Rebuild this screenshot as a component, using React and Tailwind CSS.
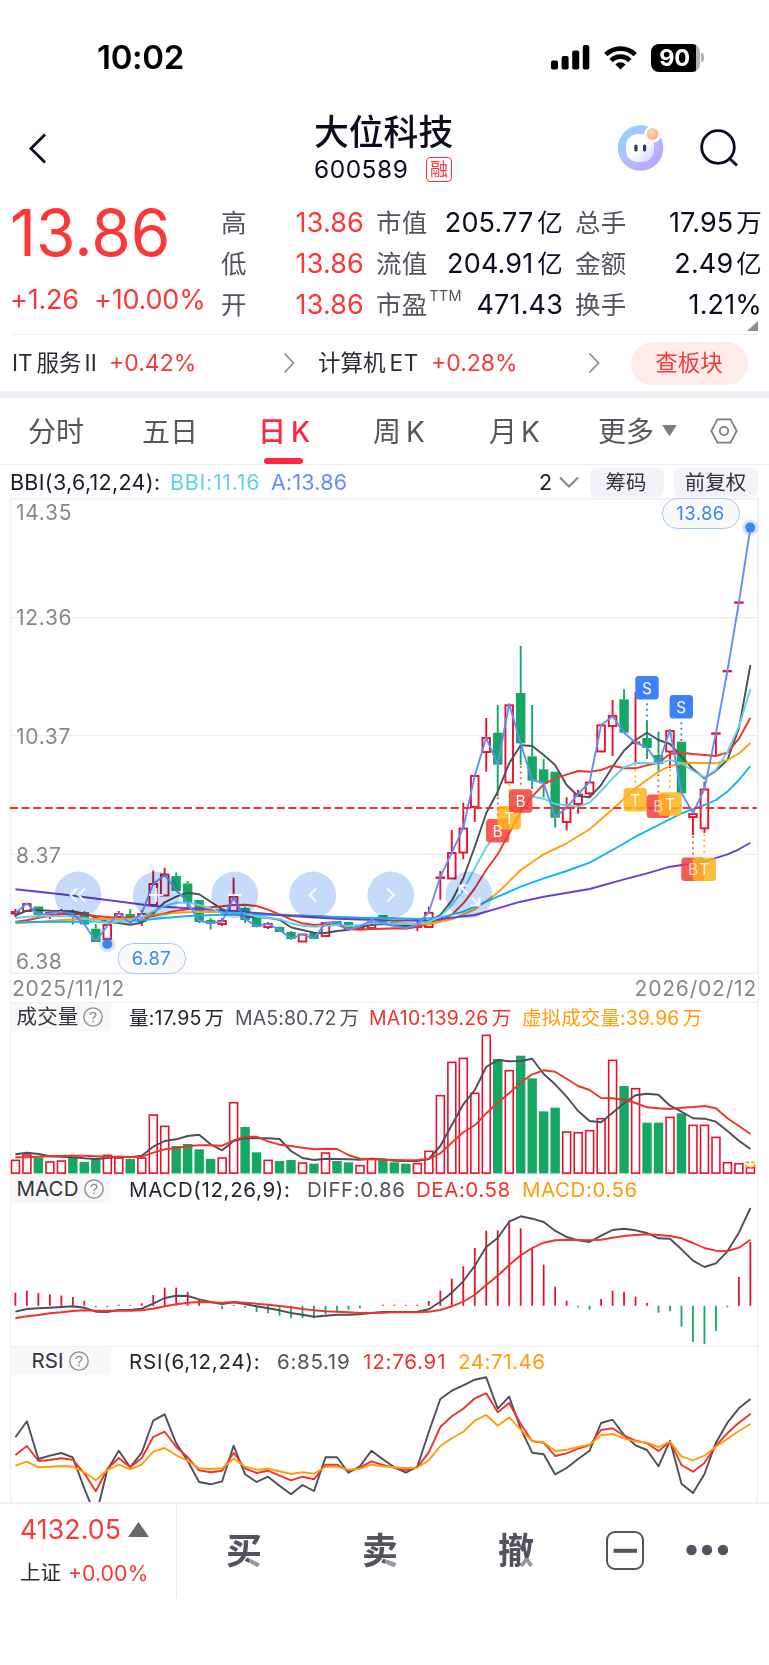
const X0 = 15.4;
const STEP = 11.484;
const cx = (i) => X0 + i * STEP;

// [direction, high, bodyTop, bodyBottom, low]
const CANDLES = [
  ['r', 909, 912, 913.5, 917], ['r', 903, 904, 911, 911], ['g', 906.5, 906.5, 915, 915], ['r', 912, 913, 914, 919],
  ['r', 909, 912, 914, 914], ['g', 909.5, 911.5, 914.5, 924.5], ['g', 911, 912, 924.5, 924.5], ['g', 924, 928.7, 942, 942],
  ['r', 924, 925, 939, 944], ['r', 911, 914, 917, 918], ['g', 909, 914, 919, 922], ['r', 910, 914, 921, 926],
  ['r', 870.5, 884, 905, 907], ['r', 867.7, 874.5, 895.5, 896], ['g', 872.5, 876, 891, 891], ['g', 881, 883.5, 903, 909],
  ['g', 900, 900, 922, 923], ['g', 918, 920, 924, 929.5], ['r', 918, 921, 924, 926], ['r', 877.7, 897, 911, 911],
  ['g', 906.7, 908, 920, 923], ['g', 916, 917, 927, 927], ['r', 922, 924, 927, 929], ['g', 926.5, 927, 932, 932],
  ['g', 931, 932, 939, 940], ['r', 934, 934.5, 941.5, 942], ['g', 932, 932.7, 939, 939], ['r', 922, 923, 936, 936],
  ['g', 921, 921, 924, 925], ['g', 921.7, 922, 929.5, 931], ['r', 925, 926, 928, 928], ['r', 920, 923, 928, 928],
  ['g', 915, 915, 924, 924], ['g', 921, 922, 926, 926], ['g', 925, 926, 929, 929], ['r', 921, 924, 927, 931],
  ['r', 906.7, 912.8, 927, 927], ['r', 871, 877.5, 878, 899.7], ['r', 830, 853, 878.5, 878.5], ['r', 802.7, 828.5, 852.5, 859],
  ['r', 775.5, 776, 807, 822], ['r', 718, 738, 752, 771.7], ['g', 705, 732.7, 764.7, 796], ['r', 704, 705.3, 782.5, 783],
  ['g', 646, 693, 743.3, 765], ['g', 705, 756.3, 780.7, 789], ['g', 759, 769.3, 783.3, 797.3], ['g', 771.7, 771.7, 817.7, 827.5],
  ['r', 797.3, 808, 822, 830.3], ['r', 790, 794.5, 804, 813.7], ['r', 782, 782.5, 793.3, 798], ['r', 724.5, 725.3, 751.5, 752],
  ['r', 700, 716, 726, 756], ['g', 689.3, 699.3, 732.7, 732.7], ['r', 692, 742.5, 743, 763], ['g', 722, 738, 748, 759],
  ['g', 731.5, 755, 764, 773], ['r', 729, 731, 751.5, 768], ['g', 741.7, 741.7, 793.3, 793.3], ['r', 813, 814, 817, 835],
  ['r', 781.7, 789.5, 828.3, 833], ['r', 733.3, 733.3, 733.8, 757], ['r', 671, 671, 671.4, 671.4], ['r', 602.4, 602.4, 602.8, 602.8],
];

const CLOSE = [
  913.3, 903.3, 914.7, 913.5, 911.7, 914, 924, 941.3, 925.7, 913.3, 923.3, 913.5, 884, 875, 890, 902.7, 921, 923, 921.5,
  897.3, 919, 926.7, 923.7, 930, 938.5, 934.3, 938.5, 922.7, 922, 929.7, 926.7, 920, 923.5, 926, 928, 925, 912, 877, 852.7,
  828, 775.5, 737.7, 764.7, 704, 743.5, 780, 783, 817, 807.7, 794, 782, 725, 716.3, 732.7, 742.7, 747.5, 764, 730, 793,
  813, 789, 733.3, 671, 602.5, 527.7,
];
const MA5 = [
  915.7, 910.7, 910, 910.7, 911, 911.3, 913.7, 917.7, 921.7, 923, 924.7, 922.7, 913.3, 902.3, 896.7, 892.7, 894.3, 901.7,
  909.3, 913.3, 916.7, 917.3, 917.7, 919.7, 927.3, 930, 932.7, 933, 931, 929.7, 927, 925, 924, 925, 926, 925, 921, 915,
  900.7, 878.3, 846.7, 813.3, 791.7, 763.3, 745.3, 746, 755, 765, 785, 796, 797.3, 785, 766.7, 750.5, 740, 732.7, 740,
  744, 756.7, 769, 778.3, 770.7, 760, 728.3, 665,
];
const BBI = [
  918, 916.7, 916.3, 916.3, 916.3, 916, 918, 921.7, 922.7, 921.7, 920, 917, 911.7, 906, 902.7, 902.7, 905, 908.3, 912.7,
  912.7, 913.3, 916.7, 918, 919, 923.3, 925.7, 926.7, 926, 925, 926, 925, 923.3, 923.3, 923.7, 924, 924, 921.7, 916.7,
  905, 890, 868.3, 847.3, 831.7, 815, 801, 796.7, 798.7, 804, 805.3, 806.7, 802.7, 791, 778.3, 767.3, 763, 763, 763.3,
  760, 763.3, 770.7, 777.3, 770, 752, 726.7, 688.7,
];
const MA10 = [
  921.7, 920.3, 917.7, 916, 914.3, 913.7, 914.3, 916, 917, 917.7, 917.3, 917.7, 916, 913.3, 910.7, 909.3, 908, 907.3,
  906.3, 905, 904.7, 906, 909.7, 914.3, 919.3, 923.3, 925, 924.3, 924.7, 929, 929.7, 929, 928.7, 928.3, 928.7, 926.7,
  924, 920.7, 914.7, 903.3, 888.3, 870, 854.3, 833.3, 811.7, 796.7, 784.3, 778.3, 774.7, 771, 771.7, 770, 765.7, 768.3,
  768.3, 765.3, 762.7, 754, 752.7, 754, 755, 756, 752.7, 738.7, 717.7,
];
// sparse averages: [index, y]
const MA20 = [
  [0, 923.3], [2, 922], [4, 920], [6, 919], [8, 919], [10, 919], [12, 915], [14, 912.7], [16, 911.7], [18, 912], [20, 912.7],
  [22, 914], [24, 915], [26, 916], [28, 917], [30, 918], [32, 919.5], [34, 923], [36, 924], [38, 919.3], [40, 909.3],
  [42, 892.7], [44, 870], [46, 854.3], [48, 843.3], [50, 829.3], [52, 809.3], [54, 788.3], [56, 771.7], [57, 766],
  [58, 763.3], [59, 762.7], [61, 763.3], [62, 760], [63, 753.5], [64, 743],
];
const MA30 = [
  [0, 922], [5, 921.7], [10, 921.3], [13, 918], [15, 916], [18, 914.7], [22, 914.7], [26, 916.3], [30, 917.7], [33, 918.3],
  [35, 919], [37, 917.7], [39, 911.7], [42, 896.7], [44, 886.7], [46, 878.3], [48, 871], [50, 862.7], [52, 850],
  [54, 836.7], [56, 825], [58, 813.3], [60, 805], [61, 800], [62, 791.7], [63, 780], [64, 766],
];
const MA60 = [
  [0, 889.3], [4, 894.3], [8, 900], [12, 906], [16, 909], [20, 912], [24, 916], [28, 918.7], [32, 920.3], [36, 920.7],
  [38, 917.7], [40, 915], [42, 908.3], [44, 901.7], [46, 896.7], [50, 889], [53, 879.3], [55, 873.3], [57, 866.7],
  [60, 861.7], [62, 854.3], [63, 849.3], [64, 842.7],
];

// offsets below y=990 in thirds of a pixel
const VOL = [
  509, 493, 503, 514, 511, 502, 516, 507, 494, 502, 507, 502, 373, 407, 468, 462, 478, 507, 502, 336, 411, 487, 509, 513,
  510, 517, 521, 487, 513, 517, 525, 506, 511, 517, 521, 519, 482, 315, 215, 203, 308, 134, 207, 240, 197, 265, 364, 353,
  424, 426, 420, 384, 209, 288, 294, 398, 398, 380, 370, 404, 404, 440, 516, 519, 531,
];
const VOL_MA5 = [
  493, 488, 492, 499, 500, 502, 505, 507, 504, 500, 502, 497, 470, 453, 448, 438, 434, 463, 481, 453, 444, 445, 445, 447,
  483, 504, 510, 506, 507, 508, 509, 506, 508, 512, 513, 513, 507, 468, 405, 343, 300, 231, 210, 214, 213, 206, 252, 283,
  320, 363, 393, 397, 368, 340, 316, 311, 314, 347, 365, 385, 386, 395, 423, 452, 477,
];
const VOL_MA10 = [
  502, 502, 500, 499, 498, 497, 497, 499, 500, 500, 501, 500, 488, 478, 474, 469, 466, 466, 467, 451, 440, 440, 454, 464,
  468, 473, 478, 476, 477, 495, 506, 508, 509, 510, 511, 510, 507, 490, 458, 427, 406, 370, 338, 310, 278, 253, 241, 245,
  266, 288, 300, 324, 325, 329, 339, 352, 355, 357, 353, 351, 348, 355, 385, 408, 432,
];

// offsets below y=1170 in thirds of a pixel
const MACD = [
  368, 362, 369, 373, 377, 381, 392, 412, 412, 404, 405, 400, 375, 353, 353, 366, 388, 408, 417, 405, 413, 426, 430, 437,
  445, 444, 445, 433, 423, 419, 415, 408, 404, 404, 405, 404, 393, 362, 326, 289, 234, 182, 181, 152, 175, 233, 284, 350,
  392, 412, 419, 387, 362, 365, 380, 399, 428, 424, 470, 515, 522, 483, 412, 321, 216,
];
const DIFF = [
  425, 417, 415, 413, 411, 409, 413, 425, 426, 420, 420, 416, 401, 384, 377, 378, 388, 396, 402, 397, 402, 409, 415, 421,
  429, 434, 440, 437, 434, 434, 433, 429, 426, 426, 426, 425, 418, 395, 368, 334, 287, 231, 204, 155, 139, 146, 156, 182,
  201, 211, 216, 197, 180, 176, 181, 189, 205, 206, 238, 272, 291, 280, 244, 188, 114,
];
const DEA = [
  445, 439, 435, 430, 427, 423, 421, 422, 422, 422, 422, 421, 416, 409, 403, 398, 396, 397, 398, 396, 398, 401, 404, 408,
  412, 417, 421, 424, 425, 427, 429, 429, 428, 427, 427, 427, 425, 420, 409, 395, 374, 345, 317, 285, 256, 234, 218, 211,
  209, 210, 211, 209, 203, 198, 195, 193, 195, 198, 205, 219, 234, 242, 243, 233, 209,
];
const RSI6 = [
  802, 754, 867, 857, 849, 862, 955, 1040, 900, 842, 892, 848, 752, 733, 820, 873, 936, 943, 934, 827, 913, 936, 920, 947,
  973, 945, 963, 862, 862, 908, 889, 842, 868, 892, 908, 890, 786, 687, 662, 646, 629, 622, 716, 680, 776, 848, 853, 913,
  894, 867, 842, 759, 749, 795, 826, 840, 889, 812, 941, 969, 913, 818, 758, 715, 687,
];
const RSI12 = [
  855, 828, 873, 870, 865, 869, 910, 964, 897, 864, 892, 865, 801, 785, 831, 862, 901, 907, 902, 849, 895, 909, 902, 917,
  931, 920, 928, 884, 884, 903, 893, 874, 885, 893, 900, 892, 847, 771, 739, 716, 685, 670, 727, 699, 762, 814, 818, 858,
  850, 836, 826, 780, 775, 797, 812, 820, 843, 815, 885, 905, 879, 827, 790, 758, 732,
];
const RSI24 = [
  887, 875, 892, 890, 888, 890, 907, 931, 900, 884, 898, 884, 845, 834, 856, 872, 895, 897, 895, 866, 890, 899, 896, 904,
  912, 907, 911, 890, 890, 899, 896, 884, 889, 892, 895, 893, 871, 828, 805, 785, 752, 735, 767, 742, 779, 813, 817, 843,
  839, 831, 824, 796, 792, 805, 814, 818, 831, 815, 859, 871, 857, 830, 806, 783, 762,
];

const line = (ys) => ys.map((y, i) => `${cx(i).toFixed(1)},${y}`).join(' ');
const sparse = (pts) => pts.map(([i, y]) => `${cx(i).toFixed(1)},${y}`).join(' ');
const thirds = (ys, base) => line(ys.map((y) => (base + y / 3).toFixed(1)));

const RED = '#e8112d';
const GREEN = '#15a862';

function Line({ points, color, width = 1.9 }) {
  return <polyline points={points} fill="none" stroke={color} strokeWidth={width} strokeLinejoin="round" />;
}

function StatusBar() {
  return (
    <div className="flex h-[90px] items-center pt-[25px] text-black">
      <span className="ml-[97px] w-[454px] text-[33px] leading-none font-semibold tracking-[-0.3px]">10:02</span>
      <svg className="h-[25px] w-[39px]" viewBox="0 0 39 25">
        <rect x="0" y="15.5" width="7" height="9" rx="2" />
        <rect x="10.6" y="11" width="7" height="13.5" rx="2" />
        <rect x="21.2" y="5.5" width="7" height="19" rx="2" />
        <rect x="31.8" y="0" width="6.5" height="24.5" rx="2" />
      </svg>
      <svg className="ml-[14px] h-[24px] w-[33px]" viewBox="0 0 33 24">
        <g fill="none" stroke="#000" strokeWidth="4.8">
          <path d="M1.8 8.6 A21 21 0 0 1 31.2 8.6" />
          <path d="M7.1 14.5 A13.3 13.3 0 0 1 25.9 14.5" />
        </g>
        <path d="M11.4 18.4 A7 7 0 0 1 21.6 18.4 L16.5 23.6 Z" />
      </svg>
      <div className="ml-[14px] flex h-[28px] w-[49px] items-center justify-center overflow-hidden rounded-[8px] bg-[linear-gradient(90deg,#000_91%,#b3b3b3_91%)]">
        <span className="mr-[2px] text-[23.5px] leading-none font-bold tracking-[-0.3px] text-white">90</span>
      </div>
      <div className="ml-[1px] h-[9px] w-[3px] rounded-r-full bg-[#b3b3b3]" />
    </div>
  );
}

function TitleBar() {
  return (
    <div className="flex h-[108px] items-start text-[#0d0c1f]">
      <svg className="mt-[43px] ml-[28px] h-[31px] w-[20px]" viewBox="0 0 20 31" fill="none" stroke="#0d0c1f" strokeWidth="2.8">
        <path d="M17 1.5 L3 15.5 L17 29.5" />
      </svg>
      <div className="ml-[266px] w-[300px] pt-[25px]">
        <div className="text-[34.8px] leading-[34px] font-medium">大位科技</div>
        <div className="mt-[7px] flex items-center">
          <span className="w-[112px] text-[24.5px] leading-[24px] tracking-[0.5px]">600589</span>
          <span className="mt-[1px] flex h-[25px] w-[26px] items-center justify-center rounded-[4px] border-[1.5px] border-[#fb3b3b] text-[18px] leading-none text-[#fb3b3b]">
            融
          </span>
        </div>
      </div>
      <svg className="mt-[33px] ml-[2px] h-[50px] w-[50px]" viewBox="0 0 50 50">
        <defs>
          <linearGradient id="ring" x1="0" y1="0" x2="0.9" y2="1">
            <stop offset="0" stopColor="#8fd0ff" />
            <stop offset="0.45" stopColor="#a9c4ff" />
            <stop offset="1" stopColor="#c09bff" />
          </linearGradient>
          <linearGradient id="face" x1="0" y1="0" x2="1" y2="1">
            <stop offset="0.5" stopColor="#fff" />
            <stop offset="1" stopColor="#cfc8ff" />
          </linearGradient>
          <radialGradient id="ball" cx="0.4" cy="0.35" r="0.7">
            <stop offset="0" stopColor="#ffdcb8" />
            <stop offset="1" stopColor="#ffac6e" />
          </radialGradient>
        </defs>
        <circle cx="24.5" cy="25" r="22.8" fill="url(#ring)" />
        <rect x="10" y="11" width="28" height="28" rx="12" fill="url(#face)" />
        <circle cx="36.5" cy="11.5" r="8.5" fill="#fff" />
        <circle cx="36.5" cy="11" r="5.9" fill="url(#ball)" />
        <rect x="18.3" y="21.5" width="3.2" height="7" rx="1.6" fill="#2d3a64" />
        <rect x="27" y="21.5" width="3.2" height="7" rx="1.6" fill="#2d3a64" />
      </svg>
      <svg className="mt-[38px] ml-[33px] h-[42px] w-[42px]" viewBox="0 0 42 42" fill="none" stroke="#0d0c1f" strokeWidth="2.8">
        <circle cx="19" cy="19" r="16.3" />
        <path d="M30 30 L38 37.5" />
      </svg>
    </div>
  );
}

const STATS = [
  ['高', '13.86', '市值', '205.77', '亿', '总手', '17.95', '万'],
  ['低', '13.86', '流值', '204.91', '亿', '金额', '2.49', '亿'],
  ['开', '13.86', '市盈', '471.43', '', '换手', '1.21%', ''],
];

function Quote() {
  return (
    <div className="relative flex h-[136px] items-start text-[#fb3838]">
      <div className="w-[221px] pl-[10px]">
        <div className="mt-[3px] text-[64px] leading-[64px]">13.86</div>
        <div className="mt-[21px] flex text-[27px] leading-[27px]">
          <span className="w-[84px] tracking-[-0.2px]">+1.26</span>
          <span className="tracking-[-0.2px]">+10.00%</span>
        </div>
      </div>
      <div className="mt-[4px] flex flex-col">
        {STATS.map(([a, av, b, bv, bu, c, cv, cu]) => (
          <div key={a} className="flex h-[41px] items-center text-[27px] leading-none tracking-[0.15px] text-[#0d0c1f]">
            <span className="w-[50px] text-[25.5px] text-[#54535e]">{a}</span>
            <span className="w-[93px] text-right text-[#fb3838]">{av}</span>
            <span className="ml-[12px] flex w-[60px] items-start text-[25.5px] whitespace-nowrap text-[#54535e]">
              {b}
              {b === '市盈' && <sup className="top-0 -mt-[3px] ml-[2px] text-[14.5px] leading-none tracking-[0.2px]">TTM</sup>}
            </span>
            <span className="flex w-[127px] items-center justify-end">
              {bv}
              {bu && <span className="ml-[4px] text-[25.5px]">{bu}</span>}
            </span>
            <span className="ml-[12px] w-[52px] text-[25.5px] text-[#54535e]">{c}</span>
            <span className="flex w-[135px] items-center justify-end">
              {cv}
              {cu && <span className="ml-[3px] text-[25.5px]">{cu}</span>}
            </span>
          </div>
        ))}
      </div>
      <svg className="absolute right-[11px] bottom-[3px] h-[10px] w-[11px]" viewBox="0 0 11 10">
        <path d="M11 0 V10 H0 Z" fill="#8b8b93" />
      </svg>
    </div>
  );
}

function Arrow() {
  return (
    <svg className="h-[22px] w-[12px]" viewBox="0 0 12 22" fill="none" stroke="#909098" strokeWidth="1.8">
      <path d="M1.5 1.5 L10.5 11 L1.5 20.5" />
    </svg>
  );
}

function Sectors() {
  return (
    <div className="mx-3 flex h-[57px] items-center border-t border-[#eeeeee] text-[22.5px] leading-none text-[#2c2c34]">
      <span className="w-[97px] whitespace-nowrap">IT<span className="ml-[4px]">服务</span><span className="ml-[3px]">II</span></span>
      <span className="w-[174px] text-[23px] text-[#fb3838]">+0.42%</span>
      <Arrow />
      <span className="ml-[23px] w-[113px] whitespace-nowrap">计算机<span className="ml-[4px] tracking-[0.6px]">ET</span></span>
      <span className="w-[157px] text-[23px] text-[#fb3838]">+0.28%</span>
      <Arrow />
      <span className="ml-[31px] flex h-[43px] w-[117px] items-center justify-center rounded-full bg-[#feeceb] pr-[1px] text-[22.5px] text-[#fb3838]">
        查板块
      </span>
    </div>
  );
}

function Tabs() {
  return (
    <div className="relative flex h-[67px] items-center border-b border-[#ededf0] pt-[2px] text-[28px] leading-none text-[#55555c]">
      <span className="ml-[28px] w-[114px]">分时</span>
      <span className="w-[116px]">五日</span>
      <span className="w-[115px] font-medium text-[#ff2642]">日<span className="ml-[5px]">K</span></span>
      <span className="w-[116px]">周<span className="ml-[5px]">K</span></span>
      <span className="w-[109px]">月<span className="ml-[4px]">K</span></span>
      <span className="w-[64px]">更多</span>
      <svg className="-mt-[4px] h-[11px] w-[15px]" viewBox="0 0 15 11"><path d="M1 0.5 H14 L7.5 10.5 Z" fill="#7d7c86" stroke="#7d7c86" /></svg>
      <svg className="-mt-[2px] ml-[33px] h-[26px] w-[28px]" viewBox="0 0 28 26" fill="none" stroke="#7d7c86" strokeWidth="1.8">
        <path d="M7.5 1.3 H20.5 L26.7 13 L20.5 24.7 H7.5 L1.3 13 Z" />
        <circle cx="14" cy="13" r="4.2" />
      </svg>
      <div className="absolute top-[60px] left-[264px] h-[6px] w-[39px] rounded-full bg-[#ff2642]" />
    </div>
  );
}

function IndicatorBar() {
  return (
    <div className="flex h-[33px] items-center pt-[2px] pl-[10px] text-[21.5px] leading-none text-[#1b1a2b]">
      <span className="w-[160px] tracking-[0.3px]">BBI(3,6,12,24):</span>
      <span className="w-[101px] tracking-[0.7px] text-[#62d2e8]">BBI:11.16</span>
      <span className="w-[268px] tracking-[0.2px] text-[#638cff]">A:13.86</span>
      <span className="w-[20px]">2</span>
      <svg className="-mt-[2px] h-[12px] w-[20px]" viewBox="0 0 20 12" fill="none" stroke="#85858d" strokeWidth="2"><path d="M1 1.5 L10 10.5 L19 1.5" /></svg>
      <span className="-mt-[1px] ml-[11px] flex h-[29px] w-[74px] items-center justify-center rounded-[6px] bg-[#f2f3f7] pt-[2px] pr-[2px] text-[20.5px] text-[#33333b]">筹码</span>
      <span className="-mt-[1px] ml-[10px] flex h-[29px] w-[84px] items-center justify-center rounded-[6px] bg-[#f2f3f7] pt-[2px] pr-[1px] text-[20.5px] text-[#33333b]">前复权</span>
    </div>
  );
}

const MARKS = [
  ['B', 497.7, 830.7, 797], ['T', 509.2, 817.7, 784], ['B', 520.7, 801, 766], ['T', 635.3, 799.7, 764],
  ['B', 658.3, 806.3, 774], ['T', 670, 804, 769], ['B', 693, 869.3, 836], ['T', 704.3, 869.3, 834],
];
const SELLS = [[647, 687.7, 722], [681.3, 706.7, 741]];

const BUTTONS = [
  [78, 'M-1 -6.5 L-7.5 0 L-1 6.5 M7 -6.5 L0.5 0 L7 6.5'],
  [156.3, 'M-7 0 H7 M0 -7 V7'],
  [234.7, 'M-7 0 H7'],
  [312.7, 'M3.5 -6.5 L-3 0 L3.5 6.5'],
  [390.8, 'M-3.5 -6.5 L3 0 L-3.5 6.5'],
  [469, 'M-1 -1 L-9 -9 M-9.5 -1 V-9.5 H-1 M3 3 L10 10 M10.5 2 V10.5 H2'],
];

function PriceChart() {
  return (
    <svg className="block h-[478px] w-[769px] bg-white" viewBox="0 498 769 478">
      <g stroke="#eeeef0" strokeWidth="1.2" fill="none">
        <rect x="10.6" y="498.6" width="747.4" height="474.8" strokeWidth="1.6" />
        <path d="M10 617.6 H758 M10 735.6 H758 M10 854.4 H758" />
      </g>
      <g fill="#87878a" fontSize="21" letterSpacing="0.7">
        <text x="16" y="519.5">14.35</text>
        <text x="16" y="625">12.36</text>
        <text x="16" y="743.7">10.37</text>
        <text x="16" y="862.5">8.37</text>
        <text x="16" y="969">6.38</text>
      </g>
      {CANDLES.map(([dir, high, top, bottom, low], i) => {
        const color = dir === 'r' ? RED : GREEN;
        return (
          <g key={i} stroke={color} strokeWidth="1.9">
            {high < top && <path d={`M${cx(i)} ${high} V${top}`} />}
            {low > bottom && <path d={`M${cx(i)} ${bottom} V${low}`} />}
            {dir === 'r' ? (
              <rect x={cx(i) - 3.8} y={top} width="7.6" height={bottom - top} fill="none" />
            ) : (
              <rect x={cx(i) - 4.7} y={top} width="9.4" height={bottom - top} fill={GREEN} stroke="none" />
            )}
          </g>
        );
      })}
      <Line points={line(MA5)} color="#4e4e58" />
      <Line points={line(MA10)} color="#f0342b" />
      <Line points={sparse(MA20)} color="#ff9d0a" />
      <Line points={sparse(MA30)} color="#0db4f2" />
      <Line points={sparse(MA60)} color="#6a3fcf" />
      <Line points={line(BBI)} color="#62d2e8" />
      <Line points={line(CLOSE)} color="#638cff" />
      <path d="M10 808 H757" stroke="#f0342b" strokeWidth="1.8" strokeDasharray="8 3.6" />

      {BUTTONS.map(([x, d]) => (
        <g key={x} transform={`translate(${x} 895)`}>
          <circle className="mix-blend-multiply" r="23.4" fill="#c5dbf9" />
          <path d={d} fill="none" stroke="#fff" strokeWidth="2.1" strokeOpacity="0.9" />
        </g>
      ))}

      {SELLS.map(([x, y, end]) => (
        <g key={x}>
          <path d={`M${x} ${y + 15.5} V${end}`} stroke="#3d82fc" strokeWidth="1.8" strokeDasharray="2 3.6" />
          <rect x={x - 11.7} y={y - 11.7} width="23.4" height="23.4" rx="3.5" fill="#3d82fc" />
          <text x={x} y={y + 5.8} fontSize="15.5" fill="#fff" textAnchor="middle">S</text>
        </g>
      ))}
      {MARKS.map(([t, x, y, from]) => (
        <g key={x}>
          <path d={`M${x} ${from} V${y - 13}`} stroke={t === 'B' ? '#f4574f' : '#fdb52b'} strokeWidth="1.8" strokeDasharray="2 3.6" />
          <rect x={x - 11.7} y={y - 11.7} width="23.4" height="23.4" rx="3.5" fill={t === 'B' ? '#f23f38' : '#ffb11c'} fillOpacity="0.85" />
        </g>
      ))}
      {MARKS.map(([t, x, y]) => (
        <text key={x} x={x} y={y + 5.8} fontSize="15.5" fill="#fff" textAnchor="middle" fillOpacity={x === 658.3 || x === 693 ? 0.7 : 1}>
          {t}
        </text>
      ))}

      <g fill="#3c87ec">
        <circle cx="750.2" cy="527.6" r="8" fillOpacity="0.22" />
        <circle cx="750.2" cy="527.6" r="5" />
        <circle cx="107.3" cy="944" r="8" fillOpacity="0.22" />
        <circle cx="107.3" cy="944" r="5" />
      </g>
      <rect x="662.5" y="498.5" width="77" height="30" rx="15" fill="#fafafa" stroke="#a5c9f7" />
      <text x="700.5" y="520.3" fontSize="18.5" fill="#3c87ec" textAnchor="middle" letterSpacing="0.4">13.86</text>
      <rect x="118" y="943.5" width="67.5" height="30" rx="15" fill="#fafafa" stroke="#a5c9f7" />
      <text x="151.5" y="965.3" fontSize="18.5" fill="#3c87ec" textAnchor="middle" letterSpacing="0.4">6.87</text>
    </svg>
  );
}

function PanelHeader({ name, children }) {
  return (
    <div className="flex h-[28px] items-center text-[20.5px] leading-none tracking-[0.55px] text-[#26252f]">
      <div className="flex h-full w-[100px] items-center justify-center gap-[5px] bg-[#f8f8f8] pr-[2px] text-[20.5px] tracking-[0.1px] text-[#33333b]">
        {name}
        <svg className="h-[20px] w-[20px]" viewBox="0 0 20 20" fill="none" stroke="#8a8a92" strokeWidth="1.3">
          <circle cx="10" cy="10" r="9.2" />
          <path d="M7.2 8 C7.2 4.5 12.8 4.5 12.8 8 C12.8 10 10 10 10 12.2 M10 13.6 V15.2" />
        </svg>
      </div>
      <div className="ml-[18px] flex pt-[2px] whitespace-nowrap">{children}</div>
    </div>
  );
}

function Unit({ children }) {
  return <span className="ml-[3px]">{children}</span>;
}

function VolumePanel() {
  return (
    <div className="ml-[10px] w-[748px] border-t border-r border-l border-[#eeeef0]">
      <PanelHeader name="成交量">
        <div className="flex pt-[1px] text-[19.5px] tracking-[0.1px]">
          <span className="w-[106px] tracking-[0.2px]">量:17.95<Unit>万</Unit></span>
          <span className="w-[134px] text-[#54535e]">MA5:80.72<Unit>万</Unit></span>
          <span className="w-[153px] tracking-[0.2px] text-[#f0342b]">MA10:139.26<Unit>万</Unit></span>
          <span className="text-[#ff9d0a]">虚拟成交量:39.96<Unit>万</Unit></span>
        </div>
      </PanelHeader>
      <svg className="-ml-[11px] block h-[143px] w-[769px]" viewBox="0 1031 769 143">
        {VOL.map((v, i) => {
          const y = 990 + v / 3;
          const red = i === 64 || CANDLES[i][0] === 'r';
          return red ? (
            <rect key={i} x={cx(i) - 3.9} y={y + 0.7} width="7.9" height={1172.4 - y} fill="none" stroke={RED} strokeWidth="1.6" />
          ) : (
            <rect key={i} x={cx(i) - 4.7} y={y} width="9.4" height={1173.4 - y} fill={GREEN} />
          );
        })}
        <rect x={cx(64) - 4} y="1162.3" width="8" height="5" fill="none" stroke="#ff9d0a" strokeWidth="1.8" strokeDasharray="3 2" />
        <Line points={thirds(VOL_MA5, 990)} color="#4e4e58" />
        <Line points={thirds(VOL_MA10, 990)} color="#f0342b" />
      </svg>
    </div>
  );
}

function MacdPanel() {
  const zero = 1305.8;
  return (
    <div className="ml-[10px] w-[748px] border-t border-r border-l border-[#eeeef0]">
      <PanelHeader name="MACD">
        <span className="w-[178px] tracking-[0.65px]">MACD(12,26,9):</span>
        <span className="w-[109px] text-[#54535e]">DIFF:0.86</span>
        <span className="w-[106px] text-[#f0342b]">DEA:0.58</span>
        <span className="text-[#ff9d0a]">MACD:0.56</span>
      </PanelHeader>
      <svg className="-ml-[11px] block h-[143px] w-[769px]" viewBox="0 1203 769 143">
        {MACD.map((v, i) => (
          <path key={i} d={`M${cx(i)} ${zero} V${1170 + v / 3}`} stroke={v < 408 ? RED : GREEN} strokeWidth="1.8" />
        ))}
        <Line points={thirds(DIFF, 1170)} color="#4e4e58" />
        <Line points={thirds(DEA, 1170)} color="#f0342b" />
      </svg>
    </div>
  );
}

function RsiPanel() {
  return (
    <div className="ml-[10px] w-[748px] border-t border-r border-l border-[#eeeef0]">
      <PanelHeader name="RSI">
        <span className="w-[148px] tracking-[0.8px]">RSI(6,12,24):</span>
        <span className="w-[86px] tracking-[0.7px] text-[#54535e]">6:85.19</span>
        <span className="w-[95px] tracking-[0.8px] text-[#f0342b]">12:76.91</span>
        <span className="text-[#ff9d0a]">24:71.46</span>
      </PanelHeader>
      <svg className="-ml-[11px] block h-[127px] w-[769px]" viewBox="0 1375 769 127">
        <Line points={thirds(RSI6, 1170)} color="#4e4e58" />
        <Line points={thirds(RSI12, 1170)} color="#f0342b" />
        <Line points={thirds(RSI24, 1170)} color="#ff9d0a" />
      </svg>
    </div>
  );
}

function TradeButton({ children }) {
  return (
    <button className="relative flex w-[136px] justify-center text-[36px] leading-none font-bold text-[#53525e]">
      {children}
      <span className="absolute right-[50px] bottom-[0px] h-[11px] w-[13px] bg-white/40" />
    </button>
  );
}

function BottomBar() {
  return (
    <div className="flex h-[163px] items-start border-t-2 border-[#f0f0f2]">
      <div className="h-[94px] w-[177px] border-r border-[#ebebed] pl-[20px] text-[#fb3838]">
        <div className="mt-[11px] flex items-center text-[26.7px] leading-[28px]">
          <span className="w-[108px] tracking-[0.1px]">4132.05</span>
          <svg className="h-[15px] w-[21px]" viewBox="0 0 21 15"><path d="M10.5 0 L21 15 H0 Z" fill="#67666b" /></svg>
        </div>
        <div className="mt-[18px] flex text-[21.3px] leading-[24px]">
          <span className="w-[48px] text-[20.5px] text-[#2c2c34]">上证</span>
          <span>+0.00%</span>
        </div>
      </div>
      <div className="-ml-[1px] flex h-[93px] items-center">
        <TradeButton>买</TradeButton>
        <TradeButton>卖</TradeButton>
        <TradeButton>撤</TradeButton>
        <svg className="ml-[22px] h-[40px] w-[38px]" viewBox="0 0 38 40" fill="none" stroke="#53525e">
          <rect x="1" y="1" width="36" height="37" rx="8" strokeWidth="2" />
          <path d="M7.5 19.8 H31" strokeWidth="4" />
        </svg>
        <svg className="-mt-[2px] ml-[42px] h-[12px] w-[43px]" viewBox="0 0 43 12" fill="#53525e">
          <circle cx="5.5" cy="6" r="5.2" />
          <circle cx="21" cy="6" r="5.2" />
          <circle cx="37" cy="6" r="5.2" />
        </svg>
      </div>
    </div>
  );
}

export default function App() {
  return (
    <div className="w-[769px] overflow-hidden bg-white font-[Inter,'Noto_Sans_CJK_SC',sans-serif]">
      <StatusBar />
      <TitleBar />
      <Quote />
      <Sectors />
      <div className="h-[7px] bg-[#f0f1f7]" />
      <Tabs />
      <IndicatorBar />
      <PriceChart />
      <div className="mx-[10px] flex h-[26px] items-center justify-between border-r border-l border-[#eeeef0] pr-[1px] pb-[1px] pl-[1px] text-[21px] leading-none tracking-[0.8px] text-[#87878a]">
        <span>2025/11/12</span>
        <span>2026/02/12</span>
      </div>
      <VolumePanel />
      <MacdPanel />
      <RsiPanel />
      <BottomBar />
    </div>
  );
}
